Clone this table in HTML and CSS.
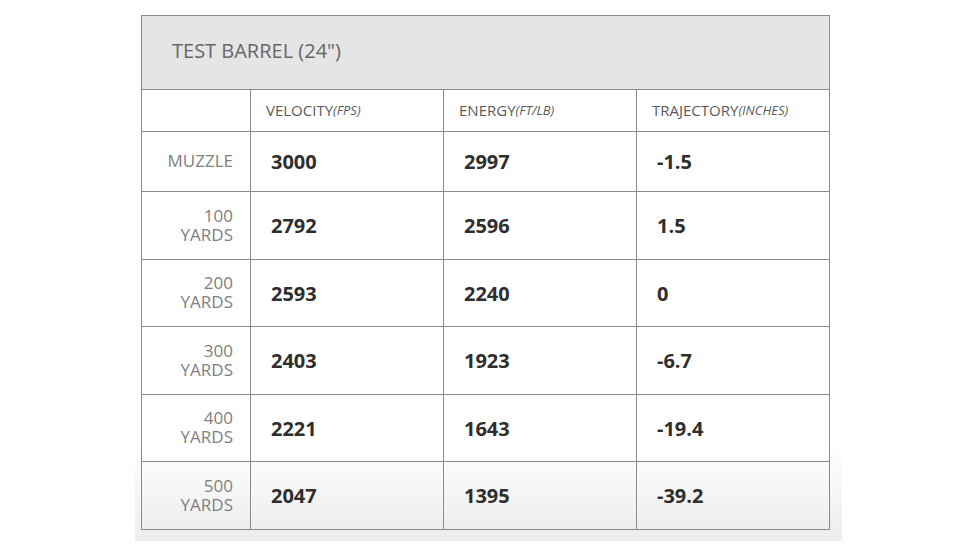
FILE: index.html
```html
<!DOCTYPE html>
<html>
<head>
<meta charset="utf-8">
<link rel="stylesheet" href="styles.css">
</head>
<body>
<div class="panel">
  <div class="grid">
    <div class="title">TEST BARREL (24")</div>
    <div class="cell"></div>
    <div class="cell colhead">VELOCITY<i>(FPS)</i></div>
    <div class="cell colhead">ENERGY<i>(FT/LB)</i></div>
    <div class="cell colhead">TRAJECTORY<i>(INCHES)</i></div>

    <div class="cell label">MUZZLE</div>
    <div class="cell val">3000</div>
    <div class="cell val">2997</div>
    <div class="cell val">-1.5</div>

    <div class="cell label">100<br>YARDS</div>
    <div class="cell val">2792</div>
    <div class="cell val">2596</div>
    <div class="cell val">1.5</div>

    <div class="cell label">200<br>YARDS</div>
    <div class="cell val">2593</div>
    <div class="cell val">2240</div>
    <div class="cell val">0</div>

    <div class="cell label">300<br>YARDS</div>
    <div class="cell val">2403</div>
    <div class="cell val">1923</div>
    <div class="cell val">-6.7</div>

    <div class="cell label">400<br>YARDS</div>
    <div class="cell val">2221</div>
    <div class="cell val">1643</div>
    <div class="cell val">-19.4</div>

    <div class="cell label last">500<br>YARDS</div>
    <div class="cell val last">2047</div>
    <div class="cell val last">1395</div>
    <div class="cell val last">-39.2</div>
  </div>
</div>
</body>
</html>
```
FILE: styles.css
```css
html, body {
  margin: 0;
  padding: 0;
  background: #ffffff;
  font-family: "Open Sans", "Liberation Sans", sans-serif;
}
.panel {
  margin-left: 135px;
  width: 689px;
  padding: 15px 12px 11px 6px;
  background: linear-gradient(to bottom, #ffffff 0, #ffffff 445px, #ececec 100%);
}
.grid {
  display: grid;
  grid-template-columns: 108px 192px 192px 192px;
  grid-template-rows: 73px 41px 59px 67px 66px 67px 66px 67px;
  gap: 1px;
  padding: 1px;
  background: #8a8a8a;
}
.title {
  grid-column: 1 / -1;
  background: #e5e5e5;
  color: #666666;
  font-size: 20px;
  padding-left: 30px;
  display: flex;
  align-items: center;
  padding-bottom: 5px;
}
.cell {
  background: #ffffff;
  display: flex;
  align-items: center;
}
.colhead {
  padding-left: 15px;
  padding-bottom: 2px;
  font-size: 15px;
  color: #5a5a5a;
}
.colhead i {
  font-size: 13px;
  font-style: italic;
}
.label {
  justify-content: flex-end;
  text-align: right;
  padding-right: 17px;
  padding-bottom: 2px;
  font-size: 17px;
  line-height: 19px;
  color: #808080;
}
.val {
  padding-left: 20px;
  font-size: 20px;
  font-weight: 700;
  color: #2e2e2e;
}
.last {
  background: linear-gradient(to bottom, #fbfbfb, #eeeeee);
}
```
